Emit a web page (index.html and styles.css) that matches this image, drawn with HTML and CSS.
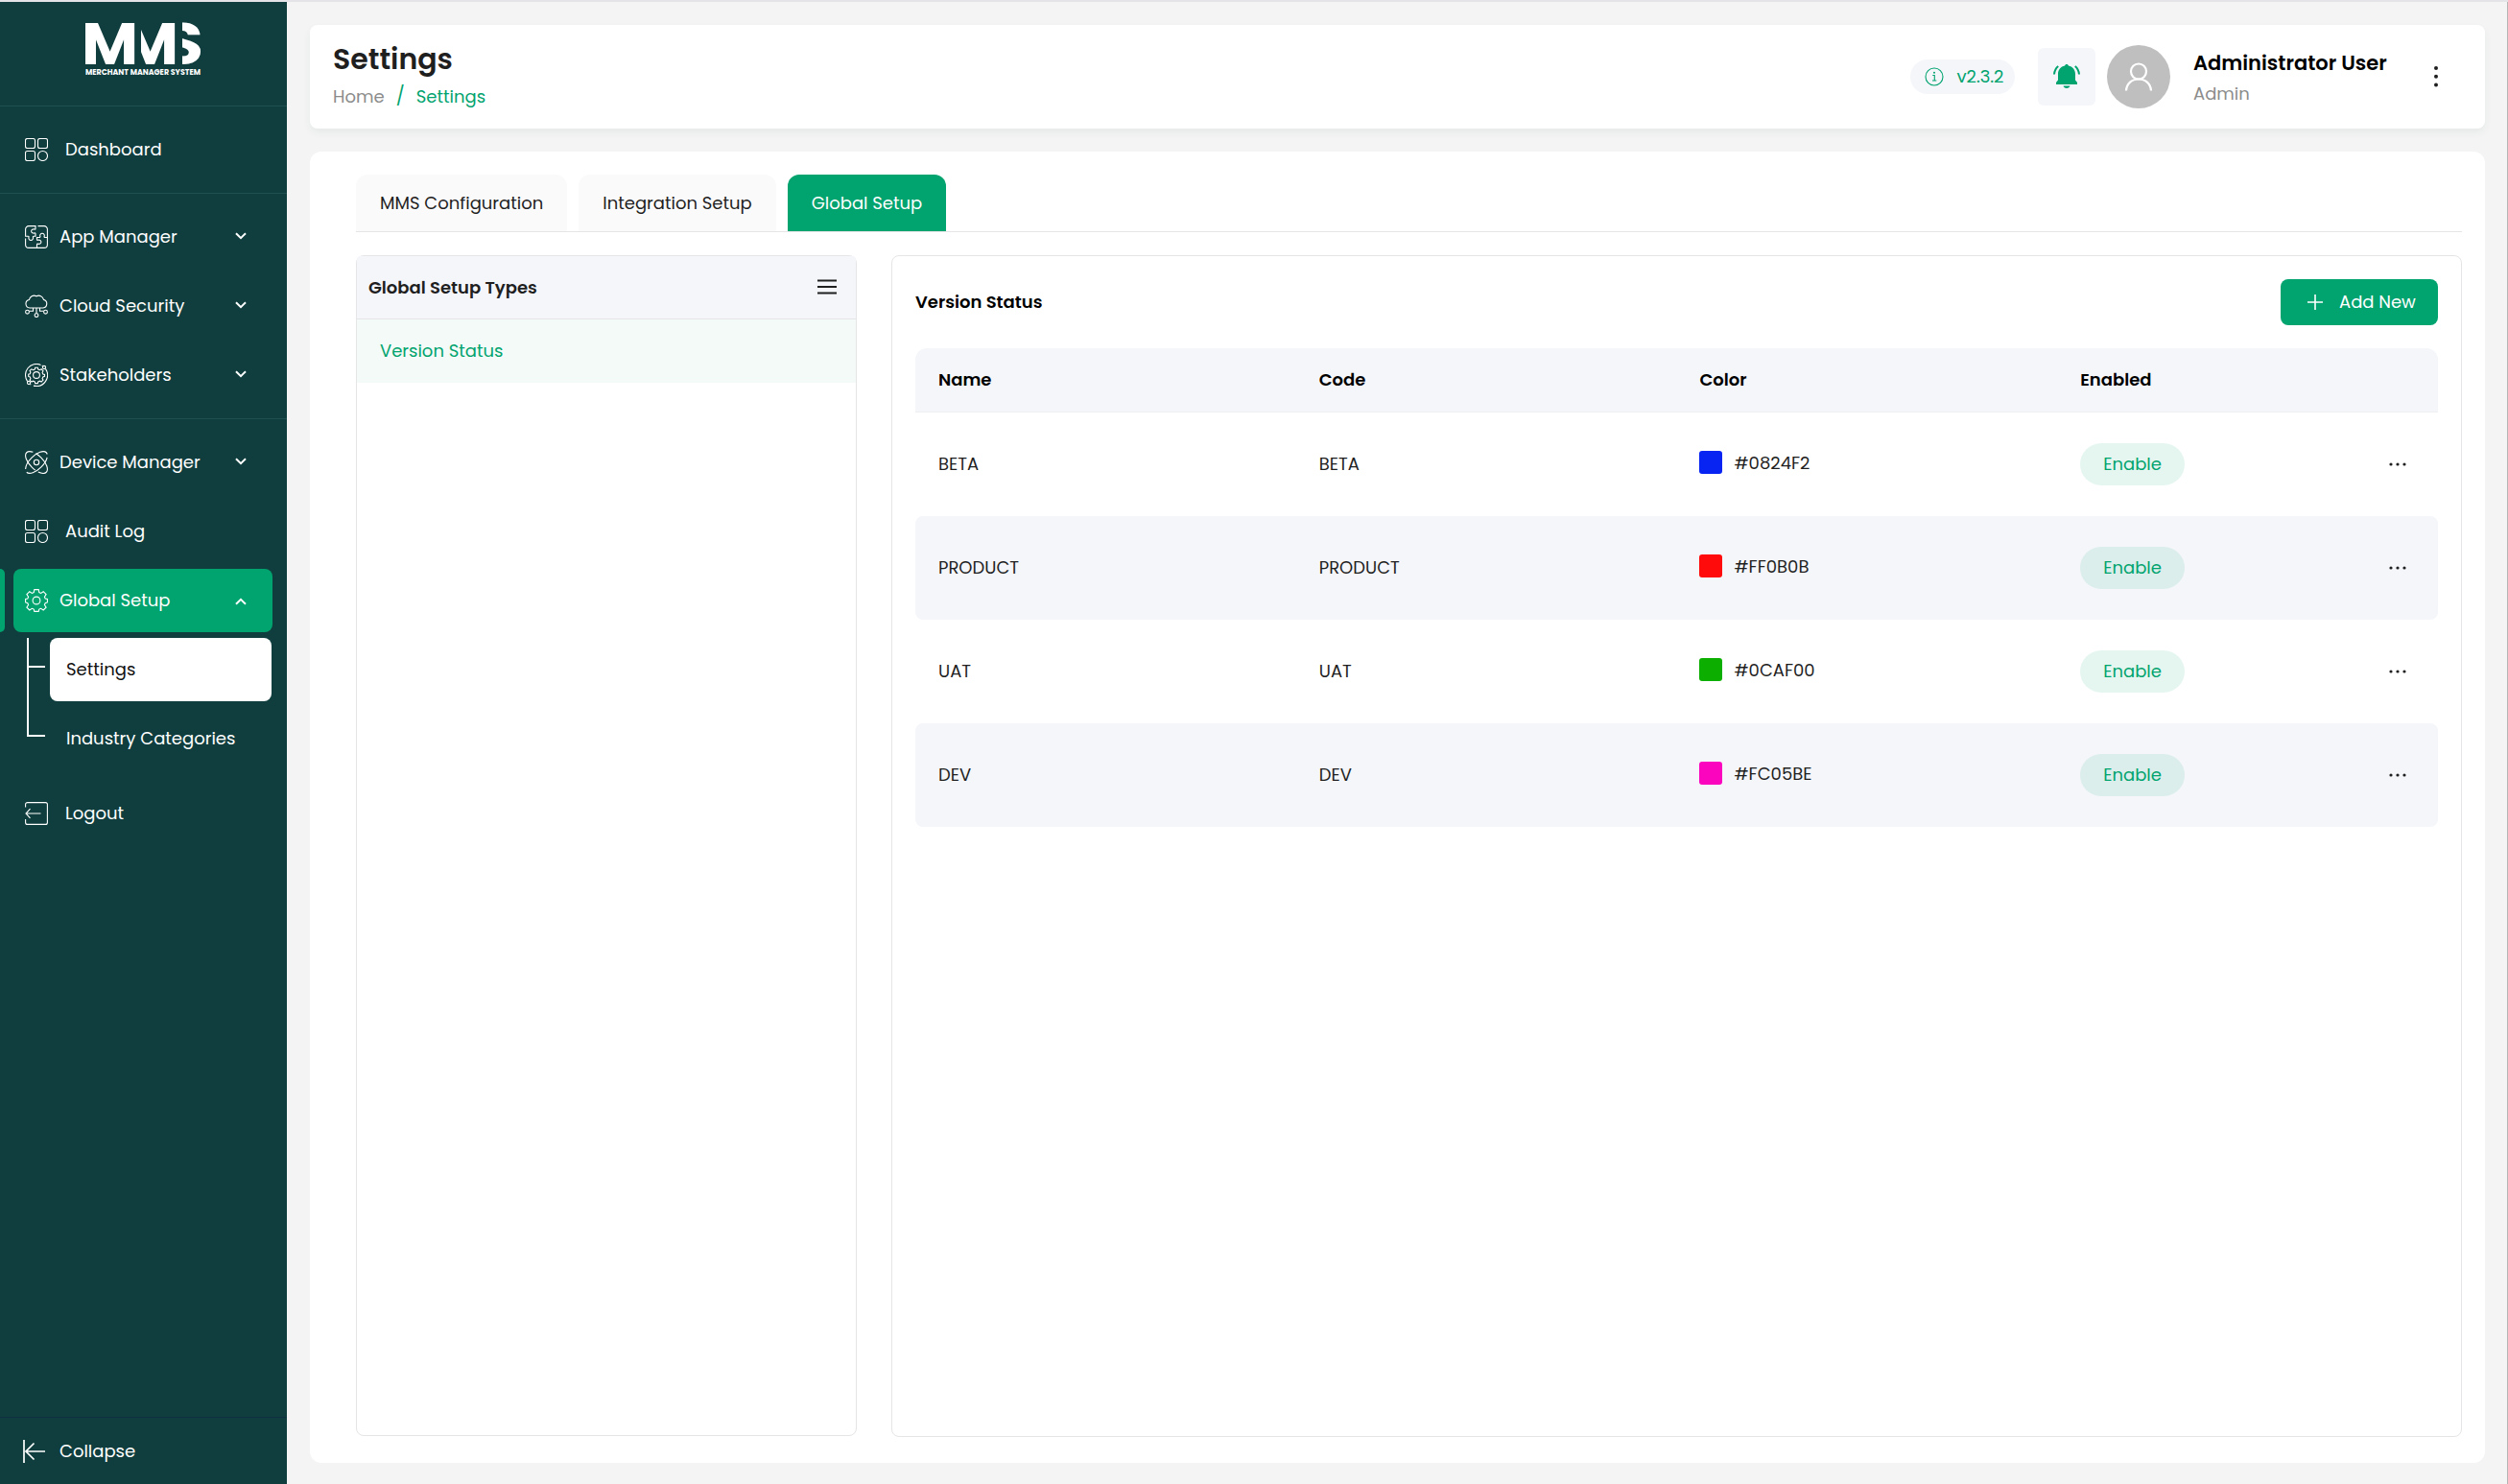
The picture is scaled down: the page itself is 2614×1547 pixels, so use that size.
FILE: index.html
```html
<!DOCTYPE html>
<html lang="en">
  <head>
    <meta charset="UTF-8" />
    <meta name="viewport" content="width=device-width, initial-scale=1.0" />
    <title>Settings - Merchant Manager System</title>
    <link rel="stylesheet" href="styles.css">
  </head>
  <body>
    <!-- shared icons -->
    <svg class="sprite">
      <symbol id="i-grid" viewBox="0 0 24 24">
        <rect x="0.5" y="0.5" width="10" height="10" rx="2" />
        <rect x="13.5" y="0.5" width="10" height="10" rx="2" />
        <rect x="0.5" y="13.5" width="10" height="10" rx="2" />
        <circle cx="18.5" cy="18.5" r="5" />
      </symbol>
      <symbol id="i-down" viewBox="0 0 12 8">
        <path d="M1 1.2l5 5 5-5" />
      </symbol>
      <symbol id="i-dots" viewBox="0 0 20 4">
        <circle cx="3" cy="2" r="1.6" />
        <circle cx="10" cy="2" r="1.6" />
        <circle cx="17" cy="2" r="1.6" />
      </symbol>
    </svg>

    <div id="app">
      <aside id="sidebar">
        <div class="logo">
          <svg width="122" height="60" viewBox="0 0 122 60">
            <clipPath id="cut-m"><path d="M58 0h50v50H58z" /></clipPath>
            <clipPath id="cut-s"><path d="M101 0h21v50h-21z" /></clipPath>
            <text class="logo-text" x="-4" y="46" textLength="59" lengthAdjust="spacingAndGlyphs">M</text>
            <g clip-path="url(#cut-m)">
              <text class="logo-text" x="38" y="46" textLength="59" lengthAdjust="spacingAndGlyphs">M</text>
            </g>
            <g clip-path="url(#cut-s)">
              <text class="logo-text" x="81" y="46" textLength="42" lengthAdjust="spacingAndGlyphs">S</text>
            </g>
            <text class="logo-sub" x="0" y="57" textLength="120" lengthAdjust="spacingAndGlyphs">MERCHANT MANAGER SYSTEM</text>
          </svg>
        </div>

        <nav>
          <div class="nav-group">
            <a class="nav-item single">
              <svg class="icon"><use href="#i-grid" /></svg>
              <span>Dashboard</span>
            </a>
          </div>

          <div class="nav-group">
            <a class="nav-item">
              <svg class="icon" viewBox="0 0 24 24">
                <path d="M11 .6H4A3.4 3.4 0 0 0 .6 4v7.2h2.800c.6 0 .8.4.6 1-.5 1.700.5 3.300 2.200 3.300s2.700-1.600 2.200-3.300c-.2-.6.1-1 .7-1H11V8.600c0-.6-.4-.8-1-.6C8.300 8.400 6.600 7.600 6.600 6S8.300 3.500 10 4c.6.2 1 0 1-.6zM13.500.6H20A3.400 3.400 0 0 1 23.400 4v16a3.400 3.400 0 0 1-3.400 3.400H4A3.400 3.400 0 0 1 .6 20v-6.500M23.400 12.500h-2.600c-.6 0-.8-.4-.6-1 .4-1.800-.5-3.300-2.200-3.300s-2.600 1.500-2.200 3.300c.2.6-.1 1-.7 1h-2.600v2.200c0 .6.4.8 1 .6 1.700-.5 3.400.3 3.400 1.900s-1.700 2.500-3.400 2c-.6-.2-1 0-1 .6v3.500" />
              </svg>
              <span>App Manager</span>
              <svg class="chevron"><use href="#i-down" /></svg>
            </a>
            <a class="nav-item">
              <svg class="icon" viewBox="0 0 24 24">
                <path d="M5 14a4.300 4.300 0 0 1-.6-8.500C5 2.500 8.500-.2 12 1.800c3-1.700 6.700.2 7.500 3.600A4.400 4.400 0 0 1 19 14zM12 14v6M8.500 14v3.200H4.500M15.500 14v3.200h4" />
                <circle cx="12" cy="21.600" r="1.900" />
                <circle cx="2.500" cy="18.200" r="1.900" />
                <circle cx="21.500" cy="18.200" r="1.900" />
              </svg>
              <span>Cloud Security</span>
              <svg class="chevron"><use href="#i-down" /></svg>
            </a>
            <a class="nav-item">
              <svg class="icon" viewBox="0 0 24 24">
                <path d="M2.600 18.600A11.500 11.500 0 0 1 16.500 1.400M21.400 5.400A11.500 11.500 0 0 1 9 23.100M18.600 2.600l-.8-.6M5.400 21.400l.8.6" />
                <circle cx="20" cy="4" r="1.600" />
                <circle cx="4" cy="20" r="1.600" />
                <circle cx="12" cy="12" r="3.400" />
                <path d="M10.700 4.200h2.600l.5 1.800 1.700.7 1.600-.9 1.900 1.900-.9 1.600.7 1.700 1.700.5v1.900l-1.700.5-.7 1.700.9 1.600-1.900 1.900-1.600-.9-1.700.7-.5 1.700h-2.600l-.5-1.700-1.700-.7-1.600.9L5 17.200l.9-1.600-.7-1.700-1.500-.5v-2.200l1.500-.5.7-1.700L5 7.400l1.900-1.600 1.600.9 1.700-.7z" />
              </svg>
              <span>Stakeholders</span>
              <svg class="chevron"><use href="#i-down" /></svg>
            </a>
          </div>

          <div class="nav-group">
            <a class="nav-item">
              <svg class="icon" viewBox="0 0 24 24">
                <ellipse cx="12" cy="12" rx="14.500" ry="7" transform="rotate(45 12 12)" pathLength="100" stroke-dasharray="13 5 42 5 35 0" />
                <ellipse cx="12" cy="12" rx="14.500" ry="7" transform="rotate(-45 12 12)" pathLength="100" stroke-dasharray="3 5 42 5 45 0" />
                <circle cx="12" cy="12" r="2.700" />
              </svg>
              <span>Device Manager</span>
              <svg class="chevron"><use href="#i-down" /></svg>
            </a>
            <a class="nav-item single">
              <svg class="icon"><use href="#i-grid" /></svg>
              <span>Audit Log</span>
            </a>
            <a class="nav-item active">
              <svg class="icon" viewBox="0 0 24 24">
                <path d="M9.800.6h4.400l.6 3 1.800.8 2.600-1.700 2.900 2.900-1.700 2.600.8 1.800 2.200.5v3.400l-2.200.9-.8 1.700 1.700 2.600-2.900 2.900-2.600-1.700-1.800.8-.6 2.300H9.800l-.6-2.300-1.800-.8L4.800 22l-2.900-2.900 1.700-2.600-.8-1.700L.6 13.900v-3.400l2.200-.5.8-1.800-1.700-2.600 2.900-2.900 2.600 1.700 1.800-.8z" />
                <circle cx="12" cy="12" r="3.900" />
              </svg>
              <span>Global Setup</span>
              <svg class="chevron up"><use href="#i-down" /></svg>
            </a>
            <div class="submenu">
              <a class="sub-item selected">Settings</a>
              <a class="sub-item">Industry Categories</a>
            </div>
            <a class="nav-item single">
              <svg class="icon" viewBox="0 0 24 24">
                <path d="M.6 5.500V2.600a2 2 0 0 1 2-2h18.800a2 2 0 0 1 2 2v18.800a2 2 0 0 1-2 2H2.600a2 2 0 0 1-2-2v-3.400M16.500 12H1M5.500 7.200L1 12l4.500 4.800" />
              </svg>
              <span>Logout</span>
            </a>
          </div>
        </nav>

        <div class="collapse">
          <svg width="24" height="26" viewBox="0 0 24 26">
            <path d="M1 1v24M23 13H3M11.500 4.500L3 13l8.500 8.500" />
          </svg>
          <span>Collapse</span>
        </div>
      </aside>

      <main>
        <header class="page-header">
          <div class="header-left">
            <h1>Settings</h1>
            <div class="breadcrumb"><span>Home</span><i>/</i><b>Settings</b></div>
          </div>
          <div class="header-right">
            <div class="version">
              <svg width="20" height="20" viewBox="0 0 20 20">
                <circle cx="10" cy="10" r="9" />
                <path d="M8.300 8.500h2V14M8 14h4.300" />
                <circle class="dot" cx="10" cy="5.700" r="1" />
              </svg>
              <span>v2.3.2</span>
            </div>
            <div class="bell">
              <svg width="30" height="28" viewBox="0 0 30 28">
                <path class="fill" d="M15 1c1 0 1.700.7 1.900 1.500 4.300.9 7.100 4.200 7.100 8.500v6.500l2 2.500v2H4v-2l2-2.500V11c0-4.300 2.800-7.600 7.100-8.500C13.300 1.700 14 1 15 1zM11.500 23.500h7c-.4 1.500-1.700 2.500-3.500 2.500s-3.100-1-3.500-2.500z" />
                <path class="line" d="M6.200 3C3.800 5 2.300 8 2 11.500M23.800 3c2.400 2 3.900 5 4.200 8.500" />
              </svg>
            </div>
            <div class="avatar">
              <svg width="30" height="30" viewBox="0 0 30 30">
                <circle cx="15" cy="9.500" r="8" />
                <path d="M2 29.500c.5-7 5.500-12 13-12s12.500 5 13 12" />
              </svg>
            </div>
            <div class="user">
              <strong>Administrator User</strong>
              <span>Admin</span>
            </div>
            <svg class="kebab" width="6" height="24" viewBox="0 0 6 24">
              <circle cx="3" cy="3" r="2" />
              <circle cx="3" cy="11.700" r="2" />
              <circle cx="3" cy="20.400" r="2" />
            </svg>
          </div>
        </header>

        <section class="content">
          <div class="tabs">
            <div class="tab">MMS Configuration</div>
            <div class="tab">Integration Setup</div>
            <div class="tab active">Global Setup</div>
          </div>

          <div class="panels">
            <div class="types">
              <div class="types-head">
                <span>Global Setup Types</span>
                <svg width="22" height="16" viewBox="0 0 22 16">
                  <path d="M1 1.500h20M1 8h20M1 14.500h20" />
                </svg>
              </div>
              <div class="type-item">Version Status</div>
            </div>

            <div class="detail">
              <div class="detail-head">
                <h2>Version Status</h2>
                <button class="add-btn">
                  <svg width="18" height="18" viewBox="0 0 18 18"><path d="M9 1v16M1 9h16" /></svg>
                  Add New
                </button>
              </div>

              <div class="table">
                <div class="row head">
                  <div>Name</div>
                  <div>Code</div>
                  <div>Color</div>
                  <div>Enabled</div>
                </div>
                <div class="row">
                  <div>BETA</div>
                  <div>BETA</div>
                  <div class="color"><span class="swatch blue"></span>#0824F2</div>
                  <div class="status"><span class="pill">Enable</span><svg class="dots"><use href="#i-dots" /></svg></div>
                </div>
                <div class="row">
                  <div>PRODUCT</div>
                  <div>PRODUCT</div>
                  <div class="color"><span class="swatch red"></span>#FF0B0B</div>
                  <div class="status"><span class="pill">Enable</span><svg class="dots"><use href="#i-dots" /></svg></div>
                </div>
                <div class="row">
                  <div>UAT</div>
                  <div>UAT</div>
                  <div class="color"><span class="swatch green"></span>#0CAF00</div>
                  <div class="status"><span class="pill">Enable</span><svg class="dots"><use href="#i-dots" /></svg></div>
                </div>
                <div class="row">
                  <div>DEV</div>
                  <div>DEV</div>
                  <div class="color"><span class="swatch pink"></span>#FC05BE</div>
                  <div class="status"><span class="pill">Enable</span><svg class="dots"><use href="#i-dots" /></svg></div>
                </div>
              </div>
            </div>
          </div>
        </section>
      </main>
    </div>
  </body>
</html>
```
FILE: styles.css
```css
* {
  margin: 0;
  padding: 0;
  box-sizing: border-box;
}
body {
  font-family: Poppins, Inter, sans-serif;
  font-size: 18px;
  line-height: 26px;
  color: #1f1f1f;
  background-color: #f4f4f4;
}
svg {
  display: block;
  fill: none;
  flex-shrink: 0;
}
.sprite {
  position: absolute;
  width: 0;
  height: 0;
}
#app {
  display: flex;
  height: 100vh;
  border-top: 2px solid #e3e3e8;
}

/* sidebar */
#sidebar {
  width: 299px;
  display: flex;
  flex-direction: column;
  background-color: #103e3e;
  color: white;
}
.logo {
  height: 108px;
  padding: 19px 0 0 89px;
}
.logo-text {
  font-size: 61px;
  font-weight: 700;
  fill: white;
}
.logo-sub {
  font-size: 8px;
  font-weight: 700;
  fill: white;
}
nav {
  flex-grow: 1;
}
.nav-group {
  border-top: 1px solid #1f5153;
  padding: 12px 15px 12px 14px;
  display: flex;
  flex-direction: column;
  gap: 6px;
}
.nav-item {
  position: relative;
  height: 66px;
  padding: 0 27px 0 12px;
  display: flex;
  align-items: center;
  gap: 12px;
  border-radius: 8px;
}
.nav-item.single {
  gap: 18px;
}
.nav-item.active {
  background-color: #01a36e;
}
.nav-item.active::before {
  content: "";
  position: absolute;
  left: -14px;
  top: 0;
  width: 5px;
  height: 66px;
  border-radius: 0 6px 6px 0;
  background-color: #01a36e;
}
.icon {
  width: 24px;
  height: 24px;
  stroke: white;
  stroke-width: 1.1;
}
.chevron {
  width: 12px;
  height: 8px;
  margin: 0 0 3px auto;
  stroke: white;
  stroke-width: 2;
}
.chevron.up {
  transform: rotate(180deg);
  margin: 2px 0 0 auto;
}
.submenu {
  margin-left: 14px;
  margin-bottom: 6px;
  display: flex;
  flex-direction: column;
  gap: 6px;
}
.sub-item {
  position: relative;
  height: 66px;
  margin: 0 1px 0 24px;
  padding-left: 17px;
  display: flex;
  align-items: center;
  border-radius: 8px;
}
.sub-item.selected {
  background-color: white;
  color: #111;
}
/* tree lines */
.sub-item::before {
  content: "";
  position: absolute;
  left: -24px;
  top: 0;
  width: 17px;
  height: 29px;
  border-left: 2px solid white;
  border-bottom: 2px solid white;
}
.sub-item + .sub-item::before {
  top: -41px;
  height: 70px;
}
.collapse {
  height: 70px;
  border-top: 1px solid #0f3040;
  padding-left: 23.5px;
  display: flex;
  align-items: center;
  gap: 14.5px;
  line-height: 27px;
}
.collapse svg {
  stroke: white;
  stroke-width: 1.7;
}

/* header */
main {
  flex-grow: 1;
  display: flex;
  flex-direction: column;
  gap: 24px;
  padding: 24px 23px 22px 24px;
  border-right: 1px solid #b5b5b5;
}
.page-header {
  height: 108px;
  padding: 0 48px 0 24px;
  display: flex;
  justify-content: space-between;
  align-items: center;
  background-color: white;
  border-radius: 8px;
  box-shadow: 0 4px 8px rgba(16, 62, 62, 0.06);
}
.header-left {
  padding-bottom: 2px;
}
h1 {
  font-size: 30px;
  line-height: 36px;
  font-weight: 600;
  margin-bottom: 7px;
}
.breadcrumb {
  display: flex;
  line-height: 27px;
  color: #8c8c8c;
}
.breadcrumb i {
  margin: 0 12px;
  font-size: 19px;
  font-style: normal;
  color: #01a36e;
}
.breadcrumb b {
  font-weight: 400;
  color: #01a36e;
}
.header-right {
  display: flex;
  align-items: center;
}
.version {
  width: 109px;
  height: 36px;
  margin-right: 24px;
  padding-left: 14.5px;
  display: flex;
  align-items: center;
  gap: 14px;
  border-radius: 18px;
  background-color: #f4f6fa;
  color: #01a36e;
}
.version svg {
  stroke: #01a36e;
  stroke-width: 1.1;
}
.version .dot {
  fill: #01a36e;
  stroke: none;
}
.bell {
  width: 60px;
  height: 60px;
  margin-right: 12px;
  display: grid;
  place-items: center;
  border-radius: 6px;
  background-color: #f4f6fa;
}
.bell .fill {
  fill: #01a36e;
}
.bell .line {
  stroke: #01a36e;
  stroke-width: 2;
}
.avatar {
  width: 66px;
  height: 66px;
  margin-right: 24px;
  display: grid;
  place-items: center;
  border-radius: 50%;
  background-color: #bfbfbf;
}
.avatar svg {
  stroke: white;
  stroke-width: 2.2;
}
.user {
  width: 250px;
  padding-top: 2px;
  display: flex;
  flex-direction: column;
  gap: 3px;
}
.user strong {
  font-size: 21px;
  line-height: 30px;
  font-weight: 600;
  color: black;
}
.user span {
  line-height: 27px;
  color: #8c8c8c;
}
.kebab {
  fill: #1f1f1f;
}

/* content */
.content {
  flex-grow: 1;
  padding: 24px 24px 27px 48px;
  display: flex;
  flex-direction: column;
  gap: 24px;
  border-radius: 12px;
  background-color: white;
}
.tabs {
  height: 60px;
  display: flex;
  gap: 12px;
  border-bottom: 1px solid #e5e5e7;
}
.tab {
  padding: 0 25px;
  line-height: 60px;
  border-radius: 12px 12px 0 0;
  background-color: #fafafa;
}
.tab.active {
  background-color: #01a36e;
  color: white;
}
.panels {
  flex-grow: 1;
  display: flex;
  gap: 36px;
}
.types {
  width: 522px;
  margin-bottom: 1px;
  border: 1px solid #e5e5e7;
  border-radius: 8px;
}
.types-head {
  height: 66px;
  padding: 0 19px 0 12px;
  display: flex;
  justify-content: space-between;
  align-items: center;
  border-bottom: 1px solid #e5e5e7;
  border-radius: 4px 4px 0 0;
  background-color: #f4f6fa;
  font-weight: 600;
  line-height: 27px;
}
.types-head svg {
  margin-bottom: 1px;
  stroke: #1f1f1f;
  stroke-width: 2;
}
.type-item {
  height: 66px;
  padding-left: 24px;
  line-height: 66px;
  background-color: #f3faf7;
  color: #01a36e;
}
.detail {
  flex-grow: 1;
  padding: 24px;
  border: 1px solid #e5e5e7;
  border-radius: 8px;
}
.detail-head {
  height: 48px;
  margin-bottom: 24px;
  display: flex;
  justify-content: space-between;
  align-items: center;
}
h2 {
  font-size: 18px;
  font-weight: 600;
  color: black;
}
.add-btn {
  width: 164px;
  height: 48px;
  padding-left: 27px;
  display: flex;
  align-items: center;
  gap: 16px;
  border: none;
  border-radius: 8px;
  background-color: #01a36e;
  color: white;
  font-family: inherit;
  font-size: 18px;
  line-height: 26px;
}
.add-btn svg {
  stroke: white;
  stroke-width: 1.6;
}
.row {
  height: 108px;
  display: grid;
  grid-template-columns: repeat(4, 1fr);
  align-items: center;
  border-radius: 8px;
}
.row > div {
  padding-left: 24px;
}
.row.head {
  height: 67px;
  border-bottom: 1px solid #eeeff0;
  border-radius: 12px 12px 0 0;
  background-color: #f4f6fa;
  color: black;
  font-weight: 600;
}
.row:nth-child(odd) {
  background-color: #f4f6fa;
}
.row > .color {
  display: flex;
  align-items: center;
  gap: 12.5px;
  margin-top: -3px;
  padding-left: 23.5px;
  line-height: 28px;
}
.swatch {
  width: 24px;
  height: 24px;
  margin-bottom: 1px;
  border-radius: 3px;
}
.blue {
  background-color: #0824f2;
}
.red {
  background-color: #ff0b0b;
}
.green {
  background-color: #0caf00;
}
.pink {
  background-color: #fc05be;
}
.status {
  display: flex;
  justify-content: space-between;
  align-items: center;
  padding-right: 32px;
}
.pill {
  padding: 0 24px;
  line-height: 44px;
  border-radius: 22px;
  background-color: rgba(1, 163, 110, 0.1);
  color: #01a36e;
}
.dots {
  width: 20px;
  height: 4px;
  fill: #1f1f1f;
}
```
